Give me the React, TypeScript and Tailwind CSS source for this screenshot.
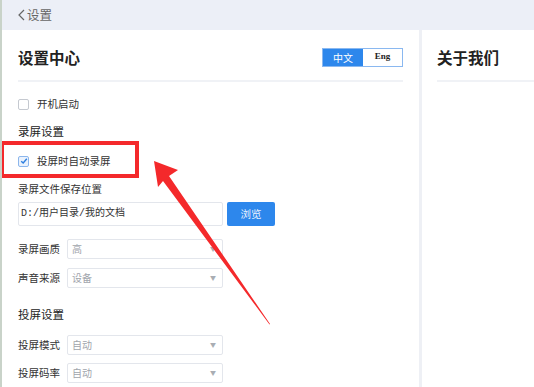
import React from 'react'

const cjk = { fontFamily: '"Noto Sans CJK SC", "Noto Sans", sans-serif' }

function Select({ value }: { value: string }) {
  return (
    <div className="flex h-[20px] w-[156px] items-center justify-between rounded-[2px] border border-[#e3e6ec] bg-white pl-[4px] pr-[6px]">
      <span className="text-[10px] leading-none text-[#a0a4ab]">{value}</span>
      <span className="text-[6px] leading-none text-[#a9adb3]">▼</span>
    </div>
  )
}

function Row({ label, value, className }: { label: string; value: string; className: string }) {
  return (
    <div className={`flex items-center ${className}`}>
      <span className="w-[49px] text-[10.5px] leading-none text-[#333]">{label}</span>
      <Select value={value} />
    </div>
  )
}

function Arrow() {
  // annotation arrow pointing at the highlighted option
  return (
    <svg className="pointer-events-none absolute left-0 top-0" width="534" height="387" viewBox="0 0 534 387">
      <polygon points="152,161 176,170 167,176 268,324 267.5,324.5 161,181 156,187" fill="#f4292b" />
    </svg>
  )
}

export default function App() {
  return (
    <div className="relative h-[387px] w-[534px] overflow-hidden border-l-2 border-[#c9d3c9] bg-white text-[#333]" style={cjk}>
      <header className="flex h-[30px] items-center bg-[#eceff7] pl-[16px] text-[12.5px] text-[#666]">
        <svg width="7" height="12" viewBox="0 0 7 12" className="mr-[2px]">
          <path d="M6 1 L1 6 L6 11" fill="none" stroke="#666" strokeWidth="1.2" />
        </svg>
        <span>设置</span>
      </header>
      <div className="flex">
        <section className="w-[417px] px-[16px] pt-[18px]">
          <div className="flex h-[20px] items-center justify-between">
            <h1 className="text-[15.5px] font-bold leading-none text-[#222]">设置中心</h1>
            <div className="mt-[-2px] flex h-[19px] w-[81px] border border-[#8ab8f0]">
              <span className="flex w-[40px] items-center justify-center bg-[#2d87ec] text-[10px] text-white">中文</span>
              <span
                className="flex flex-1 items-center justify-center bg-white text-[9px] font-bold text-[#222]"
                style={{ fontFamily: '"Liberation Serif", serif' }}
              >
                Eng
              </span>
            </div>
          </div>
          <div className="mt-[12px] h-[2px] w-full bg-[#f0f2f6]" />

          <label className="mt-[14px] flex h-[16px] items-center">
            <span className="h-[11px] w-[11px] rounded-[2px] border border-[#c5c9d0] bg-white" />
            <span className="ml-[8px] text-[10.5px] leading-none">开机启动</span>
          </label>

          <div className="mt-[11px] h-[16px] text-[11.5px] leading-[16px] text-[#222]">录屏设置</div>

          <label className="mt-[14px] flex h-[16px] items-center">
            <span className="flex h-[11px] w-[11px] items-center justify-center rounded-[2px] border border-[#8cb6ec] bg-[#eaf2fd]">
              <svg width="8" height="8" viewBox="0 0 8 8">
                <path d="M1.2 4.2 L3.2 6 L6.8 1.8" fill="none" stroke="#2d7fe0" strokeWidth="1.4" />
              </svg>
            </span>
            <span className="ml-[8px] text-[10.5px] leading-none">投屏时自动录屏</span>
          </label>

          <div className="mt-[12px] h-[16px] text-[10.5px] leading-[16px]">录屏文件保存位置</div>

          <div className="mt-[5px] flex h-[24px] items-center">
            <div className="flex h-full w-[205px] items-center rounded-[2px] border border-[#e3e6ec] pl-[2px]">
              <span className="text-[10px] leading-none text-[#333]" style={{ fontFamily: '"Liberation Mono", "Noto Sans CJK SC", monospace' }}>
                D:/用户目录/我的文档
              </span>
            </div>
            <button className="ml-[4px] h-full w-[48px] rounded-[2px] bg-[#2d87ec] text-[10.5px] text-[#e8f1fd]">浏览</button>
          </div>

          <Row label="录屏画质" value="高" className="mt-[13px]" />
          <Row label="声音来源" value="设备" className="mt-[9px]" />

          <div className="mt-[18px] h-[16px] text-[11.5px] leading-[16px] text-[#222]">投屏设置</div>

          <Row label="投屏模式" value="自动" className="mt-[13px]" />
          <Row label="投屏码率" value="自动" className="mt-[8px]" />
        </section>

        <div className="h-[357px] w-[3px] bg-[#eef0f5]" />

        <section className="flex-1 pl-[15px] pt-[18px]">
          <div className="flex h-[20px] items-center">
            <h2 className="text-[15.5px] font-bold leading-none text-[#222]">关于我们</h2>
          </div>
          <div className="mt-[12px] h-[2px] w-full bg-[#f0f2f6]" />
        </section>
      </div>

      {/* red highlight box around the option */}
      <div className="pointer-events-none absolute left-[-2px] top-[141px] h-[37px] w-[139px] border-[4px] border-[#f4292b]" />
      <Arrow />
    </div>
  )
}
